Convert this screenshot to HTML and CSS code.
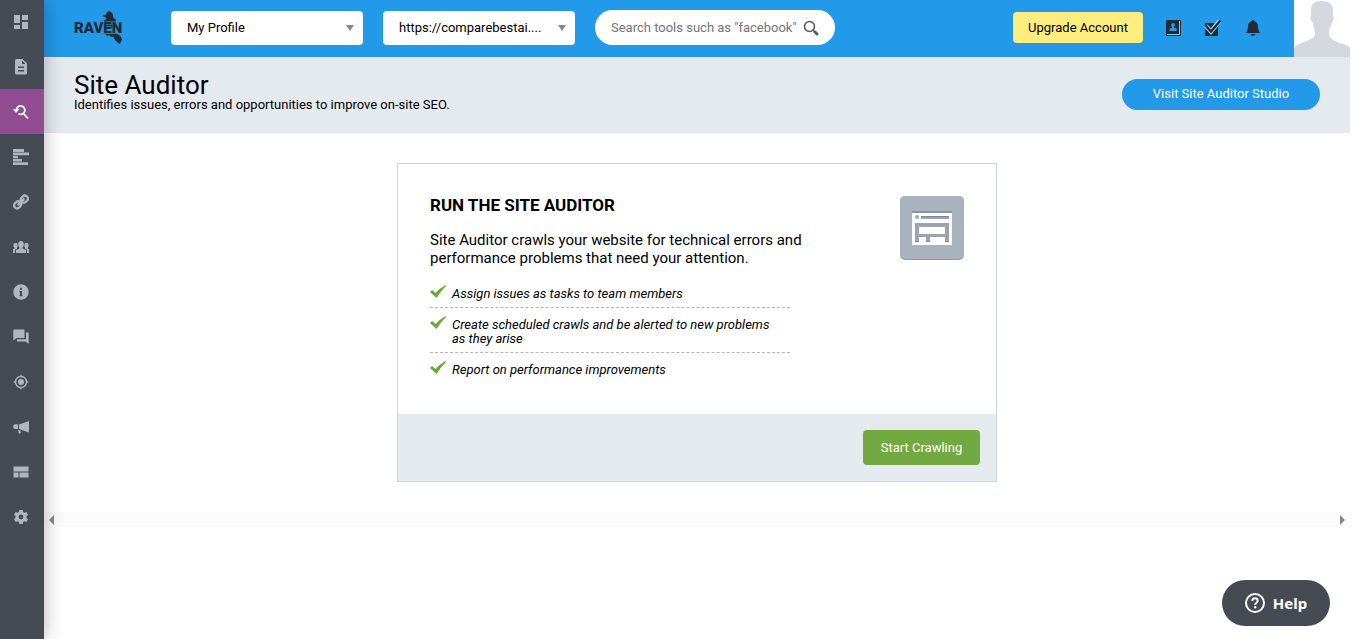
FILE: index.html
```html
<!DOCTYPE html>
<html lang="en">
  <head>
    <meta charset="UTF-8" />
    <meta name="viewport" content="width=device-width, initial-scale=1.0" />
    <title>Site Auditor - Raven</title>
    <link rel="stylesheet" href="styles.css">
  </head>
  <body>
    <nav class="sidebar">
      <a href="#" aria-label="Dashboard">
        <svg viewBox="0 0 16 16"><path d="M1 1h6v8H1zM9 1h6v5H9zM1 11h6v4H1zM9 8h6v7H9z" /></svg>
      </a>
      <a href="#" aria-label="Reports">
        <svg viewBox="0 0 16 16"><path fill-rule="evenodd" d="M4 0h5.500L14 4.500V14a1.500 1.500 0 0 1-1.500 1.500h-9A1.500 1.500 0 0 1 2 14V2a2 2 0 0 1 2-2zm5 1.500V5h3.500zM5 7.500V9h6V7.500zm0 3.500v1.500h6V11z" /></svg>
      </a>
      <a href="#" class="active" aria-label="Site Auditor">
        <svg viewBox="0 0 16 16"><path fill="none" stroke="currentColor" stroke-width="1.800" d="M3.500 5.500a4.200 4.200 0 1 1 2 4.200M10 9l5 5.500" /><path d="M0 5h6.500L3 9z" /></svg>
      </a>
      <a href="#" aria-label="Rankings">
        <svg viewBox="0 0 16 16"><path d="M0 0h11v3H0zM0 3.500h16v2.700H0zM0 7h5v2.300H0zM0 10h9v2.600H0zM0 13.200h15V16H0z" /></svg>
      </a>
      <a href="#" aria-label="Links">
        <svg viewBox="0 0 16 16"><g fill="none" stroke="currentColor" stroke-width="2.200" stroke-linecap="round"><rect x="7.500" y="2" width="7.500" height="6" rx="3" transform="rotate(-45 11.500 5)" /><rect x="1" y="8" width="7.500" height="6" rx="3" transform="rotate(-45 4.500 11)" /><path stroke-width="2.600" d="M5.500 10.500l5-5" /></g></svg>
      </a>
      <a href="#" aria-label="Competitors">
        <svg viewBox="0 0 16 16"><path d="M8 2c2 0 2.800 1.300 2.800 3.200 0 1.500-.5 2.500-1.300 3.300v1L13 11v3H3v-3l3.500-1.500v-1C5.700 7.700 5.200 6.700 5.200 5.200 5.200 3.300 6 2 8 2z" /><path d="M2.700 4c1.200 0 2 .6 2 2.200 0 1.200-.2 2-.8 2.700v.8L2 10.700V14H0v-3.500L1.300 9.600v-.8C.7 8 .4 7.300.4 6.200.4 4.600 1.400 4 2.700 4zM13.300 4c-1.200 0-2 .6-2 2.200 0 1.200.2 2 .8 2.700v.8l1.900 1V14h2v-3.500l-1.300-.9v-.8c.6-.8.9-1.500.9-2.600 0-1.600-1-2.200-2.300-2.200z" /></svg>
      </a>
      <a href="#" aria-label="Research">
        <svg viewBox="0 0 16 16"><path fill-rule="evenodd" d="M8 .3a7.700 7.700 0 1 1 0 15.400A7.700 7.700 0 0 1 8 .3zM7 3.700v2h2v-2zM6.500 7v1.200H7V11h-.5v1.200h3V11H9V7z" /></svg>
      </a>
      <a href="#" aria-label="Social">
        <svg viewBox="0 0 16 16"><path d="M1 .5h10.500V9H3.500L.3 11.500V1.200zM13 3.500h2.700V15l-3-2.500H4v-2.300h9z" /></svg>
      </a>
      <a href="#" aria-label="Advertising">
        <svg viewBox="0 0 16 16"><circle cx="8" cy="8" r="3" /><path fill="none" stroke="currentColor" stroke-width="1.400" d="M8 2.500a5.500 5.500 0 1 0 0 11 5.500 5.500 0 0 0 0-11zM8 .7v2M8 13.300v2M.7 8h2M13.300 8h2" /></svg>
      </a>
      <a href="#" aria-label="Campaigns">
        <svg viewBox="0 0 16 16"><path d="M16 2v11.500L6 10V5.500zM5 5.300V10H2.500A2.300 2.300 0 0 1 2.500 5.300zM5 11l2.800.5-.5 1 .7 1.200-2 1.300z" /></svg>
      </a>
      <a href="#" aria-label="Content">
        <svg viewBox="0 0 16 16"><path d="M.5 2.500h15v5H.5zM.5 8.500h5v5h-5zM6.500 8.500h9v5h-9z" /></svg>
      </a>
      <a href="#" aria-label="Settings">
        <svg viewBox="0 0 16 16"><path fill-rule="evenodd" d="M6.300 1h3.400l.4 2 1.300.7 2-.7 1.600 2.800-1.500 1.400v1.600l1.500 1.400-1.600 2.800-2-.7-1.300.7-.4 2H6.300l-.4-2-1.300-.7-2 .7L1 10.200l1.500-1.400V7.200L1 5.800 2.600 3l2 .7L5.900 3zM8 5.600a2.400 2.400 0 1 0 0 4.800 2.400 2.400 0 0 0 0-4.800z" /></svg>
      </a>
    </nav>

    <div class="page">
      <header class="topbar">
        <a href="#" class="logo" aria-label="Raven home">
          <svg viewBox="0 0 50 36">
            <path d="M28.500 6.500c.8-1.200 2-1.700 3.300-1.800C32.300 2.500 34 1 36.500 1l-.5 1c2.500.5 3.500 2.300 3 5l3 3-2 9-7-1-3.500-7.500 3-1.500c0-1.500-1.500-2.300-4-2.500z" />
            <path d="M28 23.500h14c3.500 1 5.500 3 6 6l-2 4.500-2.500-1.500c-1.500-1.500-3-3-4-5.500l-3-.5-1.500-1.500-2 1-1-1.500z" />
            <text x="0" y="23">RAVEN</text>
          </svg>
        </a>
        <div class="select-box">
          <select aria-label="Profile">
            <option>My Profile</option>
          </select>
        </div>
        <div class="select-box">
          <select aria-label="Campaign">
            <option>https://comparebestai....</option>
          </select>
        </div>
        <form class="search">
          <input type="text" placeholder="Search tools such as &quot;facebook&quot;" aria-label="Search tools" />
          <button type="button" aria-label="Search">
            <svg viewBox="0 0 16 16"><circle cx="6.500" cy="6.500" r="5" fill="none" stroke="currentColor" stroke-width="1.600" /><path stroke="currentColor" stroke-width="1.600" d="M10 10l2 2" /><path stroke="currentColor" stroke-width="3" stroke-linecap="round" d="M12 12l2 2" /></svg>
          </button>
        </form>
        <div class="account">
          <a href="#" class="upgrade">Upgrade Account</a>
          <a href="#" class="tool" aria-label="Contacts">
            <svg viewBox="0 0 20 20"><rect x="3" y="2" width="15" height="16" rx="1" /><path fill="none" stroke="#8fc9f3" d="M16.500 3v13.500H4" /><path fill="#2399e9" d="M10 5c1.300 0 1.800.8 1.800 2 0 .9-.3 1.500-.8 2v.8l2.700.8V13H6.500v-2.400L9 9.800V9c-.5-.5-.8-1-.8-2 0-1.200.6-2 1.800-2z" /></svg>
          </a>
          <a href="#" class="tool" aria-label="Tasks">
            <svg viewBox="0 0 20 20"><rect x="2" y="5" width="13" height="13" rx="1" /><path fill="none" stroke="#8fc9f3" stroke-width="4.500" d="M3 8l5 5.500L16.500 3" /><path fill="none" stroke="#202b33" stroke-width="2.200" d="M3 8l5 5.500L17.500 2.500" /></svg>
          </a>
          <a href="#" class="tool" aria-label="Notifications">
            <svg viewBox="0 0 20 20"><path d="M10 2c.9 0 1.300.5 1.300 1.200C14 4 15 6 15 8.500c0 3 .8 4.500 2 6.500H3c1.200-2 2-3.500 2-6.500C5 6 6 4 8.700 3.200 8.700 2.500 9.100 2 10 2zM8 16h4c0 1.300-.8 2-2 2s-2-.7-2-2z" /></svg>
          </a>
        </div>
        <a href="#" class="avatar" aria-label="Account">
          <svg viewBox="0 0 56 57"><path fill="#d3d8df" d="M28 1c7 0 11 3 11 9v6c1 1 1 5-1 6-1 4-2 6-3 8v5c2 5 6 6 11 8 6 2 10 3 10 6v8H0v-8c0-3 5-5 10-7 5-2 9-3 11-7v-5c-1-2-2-4-2-8-3-1-3-5-2-6v-6c0-5 3-9 11-9z" /></svg>
        </a>
      </header>

      <section class="page-title">
        <div>
          <h1>Site Auditor</h1>
          <p>Identifies issues, errors and opportunities to improve on-site SEO.</p>
        </div>
        <a href="#" class="studio">Visit Site Auditor Studio</a>
      </section>

      <main>
        <div class="card">
          <div class="card-body">
            <div class="card-text">
              <h2>RUN THE SITE AUDITOR</h2>
              <p>Site Auditor crawls your website for technical errors and performance problems that need your attention.</p>
              <ul>
                <li>
                  <svg viewBox="0 0 16 14"><path d="M0 7l2-2 3.500 3Q10 3 15.500 0L16 1Q11 6 6.500 13z" /></svg>
                  Assign issues as tasks to team members
                </li>
                <li>
                  <svg viewBox="0 0 16 14"><path d="M0 7l2-2 3.500 3Q10 3 15.500 0L16 1Q11 6 6.500 13z" /></svg>
                  Create scheduled crawls and be alerted to new problems as they arise
                </li>
                <li>
                  <svg viewBox="0 0 16 14"><path d="M0 7l2-2 3.500 3Q10 3 15.500 0L16 1Q11 6 6.500 13z" /></svg>
                  Report on performance improvements
                </li>
              </ul>
            </div>
            <svg class="tool-icon" viewBox="0 0 64 64">
              <rect width="64" height="64" rx="5" fill="#8d99a5" />
              <rect width="64" height="63" rx="5" fill="#a8b3be" />
              <path fill="#8993a2" d="M12 16q0-1 1-1h38q1 0 1 1v2H12z" />
              <path fill="#fff" d="M12 17h40v32H12z" />
              <circle cx="17" cy="21" r="2" fill="#9ca7b4" />
              <path fill="#9ca4b2" d="M21 20h28v3H21zM15 27h34v19h-4v-5H30v5h-4v-5h-7v5h-4z" />
              <path fill="#fff" d="M19 31h26v7H19z" />
              <path fill="#7f8897" d="M15 45h4v1h-4zM26 45h4v1h-4zM45 45h4v1h-4zM21 20h28v1H21z" />
            </svg>
          </div>
          <div class="card-footer">
            <button type="button">Start Crawling</button>
          </div>
        </div>
      </main>

      <div class="scroll-strip">
        <button type="button" class="prev" aria-label="Scroll left"></button>
        <button type="button" class="next" aria-label="Scroll right"></button>
      </div>
    </div>

    <button type="button" class="help">
      <svg viewBox="0 0 20 20"><circle cx="10" cy="10" r="9" fill="none" stroke="currentColor" stroke-width="2" /><path fill="none" stroke="currentColor" stroke-width="1.900" d="M7.300 8c0-1.700 1.100-2.700 2.700-2.700s2.700 1 2.700 2.400c0 1.900-2.500 2-2.500 4.300" /><circle cx="10.200" cy="14.300" r="1.200" /></svg>
      Help
    </button>
  </body>
</html>
```

FILE: styles.css
```css
* {
  box-sizing: border-box;
}
body {
  margin: 0;
  display: flex;
  min-height: 100vh;
  font-family: Roboto, "Liberation Sans", sans-serif;
  font-size: 13px;
  color: #000;
  background-color: #fff;
}
a {
  text-decoration: none;
}
button,
input,
select {
  font-family: inherit;
  font-size: 13px;
  border: none;
}
button {
  cursor: pointer;
}
svg {
  display: block;
  fill: currentColor;
}
h1,
h2,
p,
ul {
  margin: 0;
  padding: 0;
}

/* sidebar */
.sidebar {
  width: 44px;
  flex-shrink: 0;
  background-color: #464a53;
  box-shadow: 0 0 20px rgba(0, 0, 0, 0.3);
  z-index: 2;
}
.sidebar a {
  display: flex;
  align-items: center;
  justify-content: center;
  height: 45px;
  padding-right: 2px;
  color: #b1b5bf;
}
.sidebar a:first-child {
  height: 44px;
}
.sidebar a.active {
  background-color: #924d92;
  color: #fff;
}
.sidebar svg {
  width: 16px;
  height: 16px;
}

/* top bar */
.page {
  flex: 1;
  min-width: 0;
  padding-right: 2px;
}
.topbar {
  display: flex;
  align-items: center;
  gap: 20px;
  height: 57px;
  padding: 0 0 2px 30px;
  background-color: #2399e9;
}
.logo {
  margin-right: 27px;
  color: #202b33;
}
.logo svg {
  width: 50px;
  height: 36px;
}
.logo text {
  font-size: 15px;
  font-weight: 900;
  stroke: #2399e9;
  stroke-width: 1px;
  paint-order: stroke;
}
.select-box {
  position: relative;
  width: 192px;
}
.select-box select {
  appearance: none;
  width: 100%;
  height: 34px;
  padding: 0 32px 0 16px;
  border-radius: 4px;
  background-color: #fff;
  color: #000;
}
.select-box::after {
  content: "";
  position: absolute;
  top: 14px;
  right: 9px;
  border: 4px solid transparent;
  border-top: 6px solid #888;
  border-bottom: none;
  pointer-events: none;
}
.search {
  display: flex;
  align-items: center;
  width: 240px;
  height: 35px;
  padding: 0 16px;
  border-radius: 18px;
  background-color: #fff;
}
.search input {
  flex: 1;
  min-width: 0;
  padding: 0;
  background: none;
}
.search input::placeholder {
  color: #757575;
}
.search button {
  padding: 0;
  background: none;
  color: #555b61;
}
.search svg {
  width: 16px;
  height: 16px;
}
.account {
  display: flex;
  align-items: center;
  gap: 20px;
  margin-left: auto;
}
.upgrade {
  width: 130px;
  border-radius: 4px;
  background-color: #ffee7d;
  color: #000;
  line-height: 31px;
  text-align: center;
}
.tool {
  color: #202b33;
}
.tool svg {
  width: 20px;
  height: 20px;
}
.avatar {
  align-self: flex-start;
  margin-left: 11px;
  background-color: #fff;
}
.avatar svg {
  width: 56px;
  height: 57px;
}

/* page title */
.page-title {
  display: flex;
  justify-content: space-between;
  align-items: center;
  height: 76px;
  padding: 0 30px 2px;
  background-color: #e5eaee;
}
.page-title h1 {
  font-size: 26px;
  font-weight: normal;
  line-height: 26px;
}
.page-title p {
  line-height: 14px;
  padding-bottom: 4px;
}
.studio {
  width: 198px;
  padding-bottom: 2px;
  border-radius: 16px;
  background-color: #2399e9;
  color: #fff;
  line-height: 29px;
  text-align: center;
}

/* card */
main {
  padding: 30px;
}
.card {
  max-width: 600px;
  margin: 0 auto;
  border: 1px solid #cdd6e0;
}
.card-body {
  display: flex;
  justify-content: space-between;
  align-items: flex-start;
  padding: 32px;
}
.card-text {
  width: 380px;
}
.card h2 {
  font-size: 17px;
  line-height: 19px;
  margin-bottom: 16px;
}
.card p {
  font-size: 15px;
  line-height: 18px;
  margin-bottom: 16px;
}
.card ul {
  width: 360px;
  list-style: none;
}
.card li {
  display: flex;
  gap: 6px;
  padding: 10px 12px 6px 0;
  border-bottom: 1px dashed #b5b5b5;
  font-style: italic;
  line-height: 14px;
}
.card li:first-child {
  padding-top: 4px;
}
.card li:last-child {
  padding-bottom: 5px;
  border-bottom: none;
}
.card li svg {
  flex-shrink: 0;
  width: 16px;
  height: 14px;
  margin-top: -2px;
  color: #6aaa3c;
}
.tool-icon {
  width: 64px;
  height: 64px;
}
.card-footer {
  display: flex;
  justify-content: flex-end;
  padding: 16px;
  background-color: #e5eaee;
}
.card-footer button {
  width: 117px;
  height: 35px;
  padding-bottom: 2px;
  border-radius: 4px;
  background-color: #72a940;
  color: #fff;
}

/* scroll strip */
.scroll-strip {
  display: flex;
  justify-content: space-between;
  align-items: center;
  height: 15px;
  padding: 0 5px;
  background-color: #fcfcfc;
}
.scroll-strip button {
  padding: 0;
  background: none;
  border: 5px solid transparent;
}
.scroll-strip .prev {
  border-left: none;
  border-right-color: #888;
}
.scroll-strip .next {
  border-right: none;
  border-left-color: #888;
}

.help {
  position: fixed;
  right: 22px;
  bottom: 13px;
  display: flex;
  align-items: center;
  justify-content: center;
  gap: 8px;
  width: 108px;
  height: 46px;
  border-radius: 23px;
  background-color: #464a53;
  color: #fff;
  font-family: "Noto Sans", sans-serif;
  font-size: 15px;
  font-weight: bold;
}
.help svg {
  width: 20px;
  height: 20px;
}
```
